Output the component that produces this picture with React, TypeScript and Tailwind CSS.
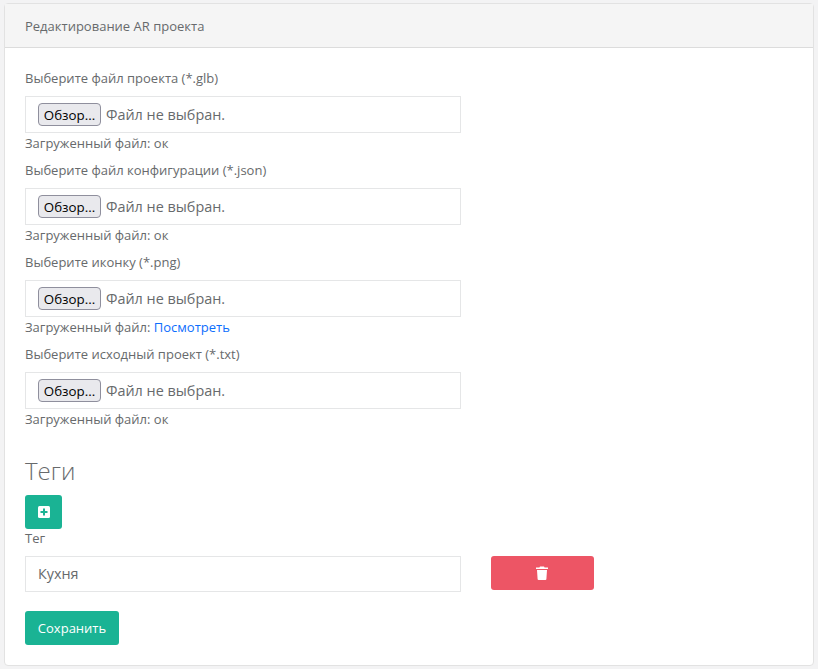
import React from 'react';

const fields = [
  { label: 'Выберите файл проекта (*.glb)', link: false },
  { label: 'Выберите файл конфигурации (*.json)', link: false },
  { label: 'Выберите иконку (*.png)', link: true },
  { label: 'Выберите исходный проект (*.txt)', link: false },
];

const FileField: React.FC<{ label: string; link: boolean }> = ({ label, link }) => (
  <div className="h-[92px]">
    <div className="h-[28px] pt-[1px] leading-[18px]">{label}</div>
    <div className="flex h-[37px] w-[436px] items-center border border-[#e5e6e7] pl-3 text-[14.4px]">
      <button className="mr-[5px] h-[23px] w-[63px] rounded-[4px] border border-[#8f8f9d] bg-[#e9e9ed] text-center font-['Open_Sans',sans-serif] text-[13.33px] leading-[20px] text-black">
        Обзор...
      </button>
      <span className="text-[#676a6c]">Файл не выбран.</span>
    </div>
    <div className="mt-[1px] leading-[18px]">
      Загруженный файл: {link ? <a className="text-[#0d6efd]">Посмотреть</a> : 'ок'}
    </div>
  </div>
);

export default function App() {
  return (
    <div className="h-[669px] overflow-hidden bg-[#f3f3f4] pt-[3px] pr-1 pl-1 font-['Open_Sans',sans-serif] text-[13px] text-[#676a6c]">
      <div className="h-[663px] rounded-[4px] border border-[#e2e2e2] bg-white">
        <div className="flex h-[44px] items-center border-b border-[#dcdcdc] bg-[#f5f5f5] pt-[2px] pl-5">
          Редактирование AR проекта
        </div>
        <div className="pt-[20px] pl-5">
          {fields.map(f => (
            <FileField key={f.label} label={f.label} link={f.link} />
          ))}
          <h3 className="mt-[18px] text-[24px] leading-[33px] font-light">Теги</h3>
          <button className="mt-[8px] flex h-[34px] w-[37px] items-center justify-center rounded-[3px] bg-[#1ab394]">
            <svg width="12" height="12" viewBox="0 0 12 12">
              <rect width="12" height="12" rx="1.5" fill="#fff" />
              <path d="M6 2.5v7M2.5 6h7" stroke="#1ab394" strokeWidth="2" />
            </svg>
          </button>
          <div className="h-[27px] leading-[18px]">Тег</div>
          <div className="flex items-start">
            <div className="flex h-[36px] w-[436px] items-center border border-[#e5e6e7] pl-3 text-[14.4px]">
              Кухня
            </div>
            <button className="ml-[30px] flex h-[34px] w-[103px] items-center justify-center rounded-[3px] bg-[#ed5565] pr-[2px]">
              <svg width="12" height="14" viewBox="0 0 12 14" fill="#fff">
                <path d="M4 0.5h4l.6 1H12v1.5H0V1.5h3.4z" />
                <path d="M1 4h10l-.6 9a1 1 0 0 1-1 1H2.6a1 1 0 0 1-1-1z" />
              </svg>
            </button>
          </div>
          <button className="mt-[19px] h-[34px] w-[94px] rounded-[3px] bg-[#1ab394] pt-[1px] text-center text-white">
            Сохранить
          </button>
        </div>
      </div>
    </div>
  );
}
